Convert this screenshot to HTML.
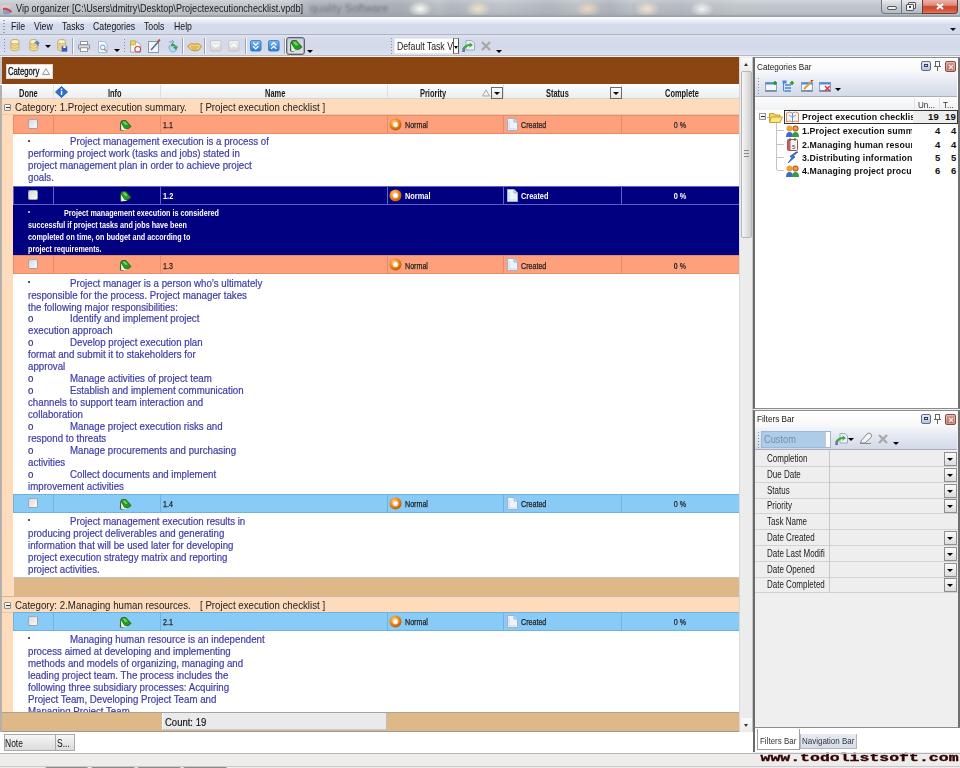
<!DOCTYPE html>
<html><head><meta charset="utf-8"><style>
*{margin:0;padding:0;box-sizing:border-box}
html,body{width:960px;height:768px;overflow:hidden;background:#efedeb;font-family:"Liberation Sans",sans-serif;font-size:10px;color:#000}
div,span{position:absolute}
.t{white-space:pre;line-height:1}
</style></head><body>
<div style="left:0px;top:0px;width:960px;height:17px;background:radial-gradient(12px 8px at 420px 9px,rgba(255,255,240,.95),rgba(255,255,240,0)),radial-gradient(13px 8px at 478px 9px,rgba(255,240,200,.75),rgba(255,240,200,0)),radial-gradient(13px 8px at 588px 9px,rgba(255,225,190,.75),rgba(255,225,190,0)),radial-gradient(13px 8px at 647px 9px,rgba(255,235,210,.8),rgba(255,235,210,0)),radial-gradient(12px 8px at 702px 9px,rgba(255,255,255,.8),rgba(255,255,255,0)),linear-gradient(90deg,rgba(0,0,0,0) 290px,rgba(40,50,60,.14) 310px,rgba(40,50,60,.16) 400px,rgba(0,0,0,.04) 440px,rgba(40,50,60,.1) 450px,rgba(0,0,0,.02) 500px,rgba(40,50,60,.1) 550px,rgba(0,0,0,.03) 575px,rgba(40,50,60,.12) 610px,rgba(0,0,0,.03) 630px,rgba(40,50,60,.08) 680px,rgba(0,0,0,0) 740px),linear-gradient(#d2d6db,#c4c9cf 25%,#bcc1c7 70%,#aeb3b9)"></div>
<div style="left:0px;top:15px;width:960px;height:2px;background:linear-gradient(#a4a9af,#9a9fa5)"></div>
<span class="t" style="left:310px;top:3px;font-size:11px;color:rgba(70,75,80,.55);filter:blur(1px)">quality Software</span>
<svg style="position:absolute;left:0px;top:2px" width="13" height="13" viewBox="0 0 13 13">
<ellipse cx="6.5" cy="10.3" rx="3.5" ry="2" fill="#8090d8" opacity="0.85"/>
<path d="M1 5 Q3 2 6 3 Q8 4 10 3 L11 5 Q8 6 5 5 Q3 5 2 7 Z" fill="#f0c8d0" opacity="0.9"/>
<path d="M3 6 Q6 5 9 7 Q11 8 12 9 L11 11 Q8 8 5 8 Q3 8 3 9 Z" fill="#d03838" opacity="0.9"/>
</svg>
<span class="t" style="left:16px;top:2.5px;transform:scaleX(0.868);transform-origin:0 0;font-size:10.5px;color:#1a1a1a">Vip organizer [C:\Users\dmitry\Desktop\Projectexecutionchecklist.vpdb]</span>
<div style="left:881px;top:0px;width:21px;height:14px;background:linear-gradient(#e8ebee,#c9ced4 50%,#b5bcc4);border:1px solid #6f7780;border-top:none;border-radius:0 0 0 4px"></div>
<div style="left:887px;top:6px;width:10px;height:4px;background:#f4f4f4;border:1px solid #555;border-radius:2px"></div>
<div style="left:901px;top:0px;width:22px;height:14px;background:linear-gradient(#e8ebee,#c9ced4 50%,#b5bcc4);border:1px solid #6f7780;border-top:none"></div>
<div style="left:908px;top:1.5px;width:8px;height:7px;border:1px solid #555;background:#eee;border-radius:1px"></div>
<div style="left:906px;top:3.5px;width:8px;height:7px;border:1px solid #555;background:#f4f4f4;border-radius:1px"></div>
<div style="left:909px;top:6px;width:2px;height:2px;background:#444"></div>
<div style="left:922px;top:0px;width:36px;height:14px;background:linear-gradient(#eab3a8,#e08c7c 40%,#cf4a32 50%,#d4583c 80%,#e07a5a);border:1px solid #6b3b36;border-top:none;border-radius:0 0 4px 0"></div>
<svg style="position:absolute;left:936px;top:2.5px" width="8" height="7"><path d="M1 1 L7 6 M7 1 L1 6" stroke="#fff" stroke-width="2"/></svg>
<div style="left:0px;top:17px;width:960px;height:18px;background:linear-gradient(#fdfdfe,#e4e8f3 30%,#d5dbeb 45%,#d5dbeb);border-bottom:1px solid #aeb4c2"></div>
<span class="t" style="left:11px;top:21px;transform:scaleX(0.83);transform-origin:0 0;font-size:10.5px;color:#15151f">File</span>
<span class="t" style="left:34px;top:21px;transform:scaleX(0.83);transform-origin:0 0;font-size:10.5px;color:#15151f">View</span>
<span class="t" style="left:62px;top:21px;transform:scaleX(0.83);transform-origin:0 0;font-size:10.5px;color:#15151f">Tasks</span>
<span class="t" style="left:92.5px;top:21px;transform:scaleX(0.83);transform-origin:0 0;font-size:10.5px;color:#15151f">Categories</span>
<span class="t" style="left:143.5px;top:21px;transform:scaleX(0.83);transform-origin:0 0;font-size:10.5px;color:#15151f">Tools</span>
<span class="t" style="left:174px;top:21px;transform:scaleX(0.83);transform-origin:0 0;font-size:10.5px;color:#15151f">Help</span>
<div style="left:3px;top:20px;width:2px;height:1px;background:#9aa0b0"></div>
<div style="left:3px;top:23px;width:2px;height:1px;background:#9aa0b0"></div>
<div style="left:3px;top:26px;width:2px;height:1px;background:#9aa0b0"></div>
<div style="left:3px;top:29px;width:2px;height:1px;background:#9aa0b0"></div>
<div style="left:3px;top:32px;width:2px;height:1px;background:#9aa0b0"></div>
<div style="left:950px;top:28px;width:0;height:0;border-left:3px solid transparent;border-right:3px solid transparent;border-top:3px solid #111"></div>
<div style="left:0px;top:35px;width:960px;height:21px;background:linear-gradient(#dfe4f1,#d5dbeb 20%,#d3d9ea 60%,#dde2ef);border-bottom:1px solid #b4b9c6"></div>
<div style="left:0px;top:56px;width:960px;height:1px;background:#f4f4f4"></div>
<div style="left:4px;top:39px;width:1px;height:1px;background:#8a8fa0"></div>
<div style="left:4px;top:42px;width:1px;height:1px;background:#8a8fa0"></div>
<div style="left:4px;top:45px;width:1px;height:1px;background:#8a8fa0"></div>
<div style="left:4px;top:48px;width:1px;height:1px;background:#8a8fa0"></div>
<div style="left:4px;top:51px;width:1px;height:1px;background:#8a8fa0"></div>
<svg style="position:absolute;left:10px;top:39px" width="10.5" height="13.5" viewBox="0 0 13 15" preserveAspectRatio="none"><ellipse cx="6" cy="3" rx="5" ry="2.3" fill="#fff3b8" stroke="#b8a060" stroke-width="0.8"/><path d="M1 3 V12 Q6 15 11 12 V3" fill="#f2dc8c" stroke="#b8a060" stroke-width="0.8"/><path d="M1 6 Q6 9 11 6 M1 9 Q6 12 11 9" fill="none" stroke="#c8b070" stroke-width="0.8"/><ellipse cx="6" cy="3" rx="5" ry="2.3" fill="#fff6c8" stroke="#b8a060" stroke-width="0.8"/></svg>
<svg style="position:absolute;left:29px;top:39px" width="11" height="13.5" viewBox="0 0 14 15" preserveAspectRatio="none"><ellipse cx="6" cy="3" rx="5" ry="2.3" fill="#fff3b8" stroke="#b8a060" stroke-width="0.8"/><path d="M1 3 V12 Q6 15 11 12 V3" fill="#f2dc8c" stroke="#b8a060" stroke-width="0.8"/><path d="M1 6 Q6 9 11 6 M1 9 Q6 12 11 9" fill="none" stroke="#c8b070" stroke-width="0.8"/><ellipse cx="6" cy="3" rx="5" ry="2.3" fill="#fff6c8" stroke="#b8a060" stroke-width="0.8"/><path d="M7 4 Q11 1 13 5 L11 5 L12 8" fill="#5a8ad8" stroke="#3a6ab8" stroke-width="0.8"/></svg>
<div style="left:45px;top:45px;width:0;height:0;border-left:3px solid transparent;border-right:3px solid transparent;border-top:3px solid #000"></div>
<svg style="position:absolute;left:56.5px;top:39px" width="11" height="13.5" viewBox="0 0 14 15" preserveAspectRatio="none"><ellipse cx="6" cy="3" rx="5" ry="2.3" fill="#fff3b8" stroke="#b8a060" stroke-width="0.8"/><path d="M1 3 V12 Q6 15 11 12 V3" fill="#f2dc8c" stroke="#b8a060" stroke-width="0.8"/><path d="M1 6 Q6 9 11 6 M1 9 Q6 12 11 9" fill="none" stroke="#c8b070" stroke-width="0.8"/><ellipse cx="6" cy="3" rx="5" ry="2.3" fill="#fff6c8" stroke="#b8a060" stroke-width="0.8"/><rect x="6" y="8" width="7" height="6" fill="#3a5ab8"/><rect x="8" y="8" width="3" height="2" fill="#fff"/></svg>
<div style="left:72px;top:38px;width:1px;height:16px;background:#9ea3b3"></div>
<div style="left:73px;top:38px;width:1px;height:16px;background:#fafbfe"></div>
<svg style="position:absolute;left:78px;top:41px" width="12" height="11" viewBox="0 0 14 13" preserveAspectRatio="none"><rect x="3" y="0.5" width="8" height="4" fill="#fff" stroke="#888"/><rect x="0.5" y="4.5" width="13" height="5" rx="1" fill="#d8dce4" stroke="#777"/><rect x="3" y="8" width="8" height="4.5" fill="#fff" stroke="#888"/></svg>
<svg style="position:absolute;left:97.5px;top:40.5px" width="11" height="12" viewBox="0 0 14 15" preserveAspectRatio="none"><path d="M0.5 0.5 H8 L11.5 4 V14.5 H0.5 Z" fill="#f4f7fb" stroke="#9aa8c0"/><circle cx="6" cy="8" r="3" fill="none" stroke="#5a9ad8" stroke-width="1.2"/><path d="M8 10 L11 13" stroke="#c87a3a" stroke-width="1.5"/></svg>
<div style="left:114px;top:49px;width:0;height:0;border-left:3px solid transparent;border-right:3px solid transparent;border-top:3px solid #000"></div>
<div style="left:124px;top:39px;width:1px;height:1px;background:#8a8fa0"></div>
<div style="left:124px;top:42px;width:1px;height:1px;background:#8a8fa0"></div>
<div style="left:124px;top:45px;width:1px;height:1px;background:#8a8fa0"></div>
<div style="left:124px;top:48px;width:1px;height:1px;background:#8a8fa0"></div>
<div style="left:124px;top:51px;width:1px;height:1px;background:#8a8fa0"></div>
<svg style="position:absolute;left:130px;top:40px" width="12" height="12.5" viewBox="0 0 14 15" preserveAspectRatio="none"><path d="M0.5 2.5 H9 L12.5 6 V14.5 H0.5 Z" fill="#f3f4f6" stroke="#9a9aa8"/><rect x="0.5" y="1" width="6" height="5" fill="#f0d050" stroke="#b89a30" stroke-width="0.6"/><circle cx="9" cy="11" r="3.3" fill="#fff" stroke="#d04040" stroke-width="1.2"/></svg>
<svg style="position:absolute;left:148px;top:39px" width="13" height="14" viewBox="0 0 13 14" preserveAspectRatio="none"><rect x="0.5" y="2.5" width="10" height="11" fill="#f4f6fa" stroke="#8a98b0"/><path d="M3 11 L11 2" stroke="#5070a0" stroke-width="1.6"/><path d="M10 2.5 L12 0.5" stroke="#e04a2a" stroke-width="1.8"/></svg>
<svg style="position:absolute;left:166px;top:39px" width="13" height="15" viewBox="0 0 13 15" preserveAspectRatio="none"><path d="M3 7 Q3 13 7 13 Q11 13 11 7 Z" fill="#b8d8f4" stroke="#7aa0c8" stroke-width="0.8"/><path d="M3 3 L8 3 L6 1 M8 3 L6 5" fill="none" stroke="#7a9ac8" stroke-width="1"/><path d="M5 5 Q9 4 10 8 L12 7 L10 11 L7 8 L9 8 Q8 6 5 7 Z" fill="#30a040"/></svg>
<div style="left:182px;top:38px;width:1px;height:16px;background:#9ea3b3"></div>
<div style="left:183px;top:38px;width:1px;height:16px;background:#fafbfe"></div>
<svg style="position:absolute;left:187px;top:42px" width="15" height="10" viewBox="0 0 15 10" preserveAspectRatio="none"><path d="M0.5 4 Q4 0.5 8 2 Q12 0.5 14.5 4 L12 8 Q8 10 4 8 Z" fill="#f0d070" stroke="#b08a30" stroke-width="0.8"/><path d="M4 5 H11 M5 7 H10" stroke="#c89a40" stroke-width="0.8"/></svg>
<div style="left:204px;top:38px;width:1px;height:16px;background:#9ea3b3"></div>
<div style="left:205px;top:38px;width:1px;height:16px;background:#fafbfe"></div>
<svg style="position:absolute;left:210px;top:40px" width="11.5" height="11.5" viewBox="0 0 13 13" preserveAspectRatio="none"><defs><linearGradient id="g210" x1="0" y1="0" x2="0" y2="1"><stop offset="0" stop-color="#f4f4f4"/><stop offset="1" stop-color="#d2d2d2"/></linearGradient></defs><rect x="0.5" y="0.5" width="12" height="12" rx="2" fill="url(#g210)" stroke="#c4c4c4"/><path d="M3.5 5 L6.5 8 L9.5 5" fill="none" stroke="#fff" stroke-width="1.6"/></svg>
<svg style="position:absolute;left:228px;top:40px" width="11.5" height="11.5" viewBox="0 0 13 13" preserveAspectRatio="none"><defs><linearGradient id="g228" x1="0" y1="0" x2="0" y2="1"><stop offset="0" stop-color="#f4f4f4"/><stop offset="1" stop-color="#d2d2d2"/></linearGradient></defs><rect x="0.5" y="0.5" width="12" height="12" rx="2" fill="url(#g228)" stroke="#c4c4c4"/><path d="M3.5 8 L6.5 5 L9.5 8" fill="none" stroke="#fff" stroke-width="1.6"/></svg>
<div style="left:245px;top:38px;width:1px;height:16px;background:#9ea3b3"></div>
<div style="left:246px;top:38px;width:1px;height:16px;background:#fafbfe"></div>
<svg style="position:absolute;left:250px;top:40px" width="11.5" height="11.5" viewBox="0 0 13 13" preserveAspectRatio="none"><defs><linearGradient id="g250" x1="0" y1="0" x2="0" y2="1"><stop offset="0" stop-color="#7ab8f0"/><stop offset="1" stop-color="#2a78d0"/></linearGradient></defs><rect x="0.5" y="0.5" width="12" height="12" rx="2" fill="url(#g250)" stroke="#3a7ac0"/><path d="M3.5 3 L6.5 6 L9.5 3 M3.5 7 L6.5 10 L9.5 7" fill="none" stroke="#fff" stroke-width="1.5"/></svg>
<svg style="position:absolute;left:268px;top:40px" width="11.5" height="11.5" viewBox="0 0 13 13" preserveAspectRatio="none"><defs><linearGradient id="g268" x1="0" y1="0" x2="0" y2="1"><stop offset="0" stop-color="#7ab8f0"/><stop offset="1" stop-color="#2a78d0"/></linearGradient></defs><rect x="0.5" y="0.5" width="12" height="12" rx="2" fill="url(#g268)" stroke="#3a7ac0"/><path d="M3.5 6 L6.5 3 L9.5 6 M3.5 10 L6.5 7 L9.5 10" fill="none" stroke="#fff" stroke-width="1.5"/></svg>
<div style="left:284px;top:38px;width:1px;height:16px;background:#9ea3b3"></div>
<div style="left:285px;top:38px;width:1px;height:16px;background:#fafbfe"></div>
<div style="left:286px;top:37px;width:19px;height:18px;background:linear-gradient(#c9d0dc,#dde2ea);border:1px solid #5a6070;border-radius:3px;box-shadow:inset 0 0 0 1px #a9b0bd"></div>
<svg style="position:absolute;left:288.5px;top:38.5px" width="15" height="14" viewBox="0 0 14 13" preserveAspectRatio="none"><path d="M0.8 11 L1.2 4 Q1.8 1 4 1 L6.8 1 L12.6 7.4 L9.8 9.8 L6.5 10.8 L2.5 12 Z" fill="#2d5a1e" opacity="0.9"/><path d="M2.4 3.4 Q3 2 4.2 1.9 L6.6 1.9 L11.4 7.4 L9.2 9.1 L5.6 9.6 Z" fill="#1f9e1f"/><path d="M3.5 2.6 L6.2 2.4 L9 5.5 L6 6 Z" fill="#6fd45f"/><path d="M2 4.2 L5.4 9.8 L8.8 10.1 L6.2 10.9 L2.2 11.3 Z" fill="#eef6ee"/></svg>
<div style="left:307px;top:50px;width:0;height:0;border-left:3px solid transparent;border-right:3px solid transparent;border-top:3px solid #000"></div>
<div style="left:391px;top:38px;width:1px;height:1px;background:#8a8fa0"></div>
<div style="left:391px;top:41px;width:1px;height:1px;background:#8a8fa0"></div>
<div style="left:391px;top:44px;width:1px;height:1px;background:#8a8fa0"></div>
<div style="left:391px;top:47px;width:1px;height:1px;background:#8a8fa0"></div>
<div style="left:391px;top:50px;width:1px;height:1px;background:#8a8fa0"></div>
<div style="left:391px;top:53px;width:1px;height:1px;background:#8a8fa0"></div>
<div style="left:394px;top:38px;width:65px;height:16px;background:#fff;border:1px solid #e8e8e8"></div>
<span class="t" style="left:397px;top:41.5px;transform:scaleX(0.87);transform-origin:0 0;font-size:10px;color:#1a1a1a">Default Task V</span>
<div style="left:452.5px;top:38px;width:6px;height:16px;background:#fff;border:1px solid #555;border-top-color:#999;border-bottom-color:#999"></div>
<div style="left:453.5px;top:46px;width:0;height:0;border-left:2px solid transparent;border-right:2px solid transparent;border-top:3px solid #000"></div>
<svg style="position:absolute;left:461px;top:40px" width="14" height="13" viewBox="0 0 14 13" preserveAspectRatio="none"><path d="M5 0.5 H10 L13.5 3 V10 H5 Z" fill="#eef2f8" stroke="#9aaac0"/><path d="M1 9 Q4 4 9 4 L8 2 L12 5 L8 8 L9 6 Q5 6 3 11 Z" fill="#3aa83a"/><path d="M1 12 Q1 9 4 9 V12 Z" fill="#7070d0"/></svg>
<svg style="position:absolute;left:481px;top:41px" width="10" height="10" viewBox="0 0 10 10" preserveAspectRatio="none"><path d="M1 1 L9 9 M9 1 L1 9" stroke="#a8a8a8" stroke-width="2.4"/></svg>
<div style="left:496px;top:50px;width:0;height:0;border-left:3px solid transparent;border-right:3px solid transparent;border-top:3px solid #000"></div>
<div style="left:0px;top:57px;width:740px;height:675px;background:#fff"></div>
<div style="left:0px;top:57px;width:739px;height:27px;background:#8b4513"></div>
<div style="left:0px;top:57px;width:1.5px;height:27px;background:#c8c8c8"></div>
<div style="left:6px;top:64px;width:47px;height:15px;background:linear-gradient(#ffffff,#f6f6f6);border:1px solid #e0d8d0"></div>
<span class="t" style="left:7.5px;top:66.5px;transform:scaleX(0.77);transform-origin:0 0;font-size:10px;color:#111;-webkit-text-stroke:0.3px #111">Category</span>
<svg style="position:absolute;left:42px;top:68px" width="8" height="7"><path d="M0.5 6.5 L4 0.5 L7.5 6.5 Z" fill="none" stroke="#9a9a9a"/></svg>
<div style="left:0px;top:85px;width:739px;height:14px;background:linear-gradient(#fdfdfd,#f3f4f6 50%,#eceef1);border-bottom:1px solid #d5d5d5"></div>
<div style="left:53px;top:85px;width:1px;height:13px;background:#dedede"></div>
<div style="left:160px;top:85px;width:1px;height:13px;background:#dedede"></div>
<div style="left:387px;top:85px;width:1px;height:13px;background:#dedede"></div>
<div style="left:503px;top:85px;width:1px;height:13px;background:#dedede"></div>
<div style="left:621px;top:85px;width:1px;height:13px;background:#dedede"></div>
<span class="t" style="left:18.5px;top:88.5px;transform:scaleX(0.745);transform-origin:0 0;font-size:10px;font-weight:bold;color:#1a1a1a">Done</span>
<span class="t" style="left:107.5px;top:88.5px;transform:scaleX(0.745);transform-origin:0 0;font-size:10px;font-weight:bold;color:#1a1a1a">Info</span>
<span class="t" style="left:265px;top:88.5px;transform:scaleX(0.745);transform-origin:0 0;font-size:10px;font-weight:bold;color:#1a1a1a">Name</span>
<span class="t" style="left:420px;top:88.5px;transform:scaleX(0.745);transform-origin:0 0;font-size:10px;font-weight:bold;color:#1a1a1a">Priority</span>
<span class="t" style="left:546px;top:88.5px;transform:scaleX(0.745);transform-origin:0 0;font-size:10px;font-weight:bold;color:#1a1a1a">Status</span>
<span class="t" style="left:665px;top:88.5px;transform:scaleX(0.745);transform-origin:0 0;font-size:10px;font-weight:bold;color:#1a1a1a">Complete</span>
<svg style="position:absolute;left:55px;top:86px" width="13" height="12" viewBox="0 0 13 12"><path d="M6.5 0.5 L12.5 6 L6.5 11.5 L0.5 6 Z" fill="#2a6fd0" stroke="#1b4ea0" stroke-width="0.8"/><rect x="5.8" y="2.5" width="1.5" height="1.5" fill="#fff"/><rect x="5.8" y="4.8" width="1.5" height="4" fill="#fff"/></svg>
<svg style="position:absolute;left:482px;top:89px" width="8" height="8"><path d="M0.5 7 L4 0.8 L7.5 7 Z" fill="none" stroke="#a8a8a8"/></svg>
<div style="left:491px;top:87px;width:12px;height:12px;background:linear-gradient(#fff,#e6e6e6);border:1px solid #6a6a6a"></div>
<div style="left:494px;top:92px;width:0;height:0;border-left:3px solid transparent;border-right:3px solid transparent;border-top:3px solid #000"></div>
<div style="left:610px;top:87px;width:12px;height:12px;background:linear-gradient(#fff,#e6e6e6);border:1px solid #6a6a6a"></div>
<div style="left:613px;top:92px;width:0;height:0;border-left:3px solid transparent;border-right:3px solid transparent;border-top:3px solid #000"></div>
<div style="left:0px;top:85px;width:2px;height:647px;background:#b4b0ac"></div>
<div style="left:2px;top:99px;width:11px;height:613px;background:#fddbbb"></div>
<div style="left:0px;top:99px;width:739px;height:16px;background:#fddbbb;border-bottom:1px solid #e8c9a8"></div>
<div style="left:4px;top:104px;width:7px;height:7px;background:linear-gradient(#fff,#e4e4e4);border:1px solid #8e8e8e;border-radius:1px"></div>
<div style="left:5.5px;top:107px;width:4px;height:1px;background:#333"></div>
<span class="t" style="left:14.5px;top:103px;transform:scaleX(0.97);transform-origin:0 0;font-size:10px;color:#222">Category: 1.Project execution summary.</span>
<span class="t" style="left:200px;top:103px;transform:scaleX(0.97);transform-origin:0 0;font-size:10px;color:#222">[ Project execution checklist ]</span>
<div style="left:13px;top:115px;width:726px;height:19px;background:#fea07b;border-top:1px solid #e68c6a;border-bottom:1px solid #e68c6a;border-left:1px solid #e68c6a"></div>
<div style="left:53px;top:115px;width:1px;height:19px;background:#e68c6a"></div>
<div style="left:160px;top:115px;width:1px;height:19px;background:#e68c6a"></div>
<div style="left:387px;top:115px;width:1px;height:19px;background:#e68c6a"></div>
<div style="left:503px;top:115px;width:1px;height:19px;background:#e68c6a"></div>
<div style="left:621px;top:115px;width:1px;height:19px;background:#e68c6a"></div>
<div style="left:28px;top:119px;width:10px;height:10px;background:linear-gradient(135deg,#d6d9de,#fafafa);border:1px solid rgba(80,80,80,0.45);border-radius:2px"></div>
<svg style="position:absolute;left:118.5px;top:118.5px" width="14" height="13" viewBox="0 0 14 13">
<path d="M0.8 11 L1.2 4 Q1.8 1 4 1 L6.8 1 L12.6 7.4 L9.8 9.8 L6.5 10.8 L2.5 12 Z" fill="#2d5a1e" opacity="0.9"/>
<path d="M2.4 3.4 Q3 2 4.2 1.9 L6.6 1.9 L11.4 7.4 L9.2 9.1 L5.6 9.6 Z" fill="#1f9e1f"/>
<path d="M3.5 2.6 L6.2 2.4 L9 5.5 L6 6 Z" fill="#6fd45f"/>
<path d="M2 4.2 L5.4 9.8 L8.8 10.1 L6.2 10.9 L2.2 11.3 Z" fill="#eef6ee"/>
</svg>
<span class="t" style="left:163px;top:120.6px;transform:scaleX(0.79);transform-origin:0 0;font-size:9px;color:#222;-webkit-text-stroke:0.25px #222;">1.1</span>
<svg style="position:absolute;left:389px;top:118px" width="13" height="13" viewBox="0 0 13 13">
<defs><radialGradient id="pg118" cx="0.4" cy="0.35" r="0.7"><stop offset="0" stop-color="#ffd39a"/><stop offset="0.5" stop-color="#f08a1e"/><stop offset="1" stop-color="#b85408"/></radialGradient></defs>
<circle cx="6.5" cy="6.5" r="6" fill="url(#pg118)"/><circle cx="6.5" cy="6.5" r="2.6" fill="#fff" stroke="#f6c58a" stroke-width="0.8"/></svg>
<span class="t" style="left:405px;top:120.6px;transform:scaleX(0.79);transform-origin:0 0;font-size:9px;color:#222;-webkit-text-stroke:0.25px #222;">Normal</span>
<svg style="position:absolute;left:507px;top:118px" width="11" height="13" viewBox="0 0 11 13">
<path d="M0.5 0.5 H7 L10.5 4 V12.5 H0.5 Z" fill="#eef3fb" stroke="#9fb3d0" stroke-width="1"/><path d="M7 0.5 V4 H10.5" fill="#cfdcef" stroke="#9fb3d0" stroke-width="1"/>
<path d="M2 3 V11 H9" fill="none" stroke="#c5d5ec" stroke-width="1"/></svg>
<span class="t" style="left:521px;top:120.6px;transform:scaleX(0.79);transform-origin:0 0;font-size:9px;color:#222;-webkit-text-stroke:0.25px #222;">Created</span>
<span class="t" style="left:621px;top:120.6px;transform:scaleX(0.79);transform-origin:50% 0;font-size:9px;color:#222;-webkit-text-stroke:0.25px #222;width:118px;text-align:center">0 %</span>
<div style="left:13px;top:134px;width:726px;height:52px;background:#fff"></div>
<div style="left:28px;top:139.75px;width:2px;height:2px;background:#555"></div>
<span class="t" style="left:70px;top:137.25px;transform:scaleX(0.97);transform-origin:0 0;font-size:10px;color:#3d3da8;-webkit-text-stroke:0.2px #3d3da8">Project management execution is a process of</span>
<span class="t" style="left:28px;top:149.2px;transform:scaleX(0.97);transform-origin:0 0;font-size:10px;color:#3d3da8;-webkit-text-stroke:0.2px #3d3da8">performing project work (tasks and jobs) stated in</span>
<span class="t" style="left:28px;top:161.15px;transform:scaleX(0.97);transform-origin:0 0;font-size:10px;color:#3d3da8;-webkit-text-stroke:0.2px #3d3da8">project management plan in order to achieve project</span>
<span class="t" style="left:28px;top:173.1px;transform:scaleX(0.97);transform-origin:0 0;font-size:10px;color:#3d3da8;-webkit-text-stroke:0.2px #3d3da8">goals.</span>
<div style="left:13px;top:186px;width:726px;height:19px;background:#000080;border-top:1px solid #6060c8;border-bottom:1px solid #6060c8;border-left:1px solid #6060c8"></div>
<div style="left:53px;top:186px;width:1px;height:19px;background:#6060c8"></div>
<div style="left:160px;top:186px;width:1px;height:19px;background:#6060c8"></div>
<div style="left:387px;top:186px;width:1px;height:19px;background:#6060c8"></div>
<div style="left:503px;top:186px;width:1px;height:19px;background:#6060c8"></div>
<div style="left:621px;top:186px;width:1px;height:19px;background:#6060c8"></div>
<div style="left:28px;top:190px;width:10px;height:10px;background:linear-gradient(135deg,#d6d9de,#fafafa);border:1px solid rgba(80,80,80,0.45);border-radius:2px"></div>
<svg style="position:absolute;left:118.5px;top:189.5px" width="14" height="13" viewBox="0 0 14 13">
<path d="M0.8 11 L1.2 4 Q1.8 1 4 1 L6.8 1 L12.6 7.4 L9.8 9.8 L6.5 10.8 L2.5 12 Z" fill="#2d5a1e" opacity="0.9"/>
<path d="M2.4 3.4 Q3 2 4.2 1.9 L6.6 1.9 L11.4 7.4 L9.2 9.1 L5.6 9.6 Z" fill="#1f9e1f"/>
<path d="M3.5 2.6 L6.2 2.4 L9 5.5 L6 6 Z" fill="#6fd45f"/>
<path d="M2 4.2 L5.4 9.8 L8.8 10.1 L6.2 10.9 L2.2 11.3 Z" fill="#eef6ee"/>
</svg>
<span class="t" style="left:163px;top:191.6px;transform:scaleX(0.82);transform-origin:0 0;font-size:9px;color:#fff;font-weight:bold;">1.2</span>
<svg style="position:absolute;left:389px;top:189px" width="13" height="13" viewBox="0 0 13 13">
<defs><radialGradient id="pg189" cx="0.4" cy="0.35" r="0.7"><stop offset="0" stop-color="#ffd39a"/><stop offset="0.5" stop-color="#f08a1e"/><stop offset="1" stop-color="#b85408"/></radialGradient></defs>
<circle cx="6.5" cy="6.5" r="6" fill="url(#pg189)"/><circle cx="6.5" cy="6.5" r="2.6" fill="#fff" stroke="#f6c58a" stroke-width="0.8"/></svg>
<span class="t" style="left:405px;top:191.6px;transform:scaleX(0.82);transform-origin:0 0;font-size:9px;color:#fff;font-weight:bold;">Normal</span>
<svg style="position:absolute;left:507px;top:189px" width="11" height="13" viewBox="0 0 11 13">
<path d="M0.5 0.5 H7 L10.5 4 V12.5 H0.5 Z" fill="#eef3fb" stroke="#9fb3d0" stroke-width="1"/><path d="M7 0.5 V4 H10.5" fill="#cfdcef" stroke="#9fb3d0" stroke-width="1"/>
<path d="M2 3 V11 H9" fill="none" stroke="#c5d5ec" stroke-width="1"/></svg>
<span class="t" style="left:521px;top:191.6px;transform:scaleX(0.82);transform-origin:0 0;font-size:9px;color:#fff;font-weight:bold;">Created</span>
<span class="t" style="left:621px;top:191.6px;transform:scaleX(0.82);transform-origin:50% 0;font-size:9px;color:#fff;font-weight:bold;width:118px;text-align:center">0 %</span>
<div style="left:13px;top:205px;width:726px;height:50px;background:#000080"></div>
<div style="left:28px;top:210.7px;width:2px;height:2px;background:#aab"></div>
<span class="t" style="left:64px;top:209.0px;transform:scaleX(0.8);transform-origin:0 0;font-size:9px;font-weight:bold;color:#fff">Project management execution is considered</span>
<span class="t" style="left:28px;top:221.0px;transform:scaleX(0.8);transform-origin:0 0;font-size:9px;font-weight:bold;color:#fff">successful if project tasks and jobs have been</span>
<span class="t" style="left:28px;top:233.0px;transform:scaleX(0.8);transform-origin:0 0;font-size:9px;font-weight:bold;color:#fff">completed on time, on budget and according to</span>
<span class="t" style="left:28px;top:245.0px;transform:scaleX(0.8);transform-origin:0 0;font-size:9px;font-weight:bold;color:#fff">project requirements.</span>
<div style="left:13px;top:255px;width:726px;height:19px;background:#fea07b;border-top:1px solid #e68c6a;border-bottom:1px solid #e68c6a;border-left:1px solid #e68c6a"></div>
<div style="left:53px;top:255px;width:1px;height:19px;background:#e68c6a"></div>
<div style="left:160px;top:255px;width:1px;height:19px;background:#e68c6a"></div>
<div style="left:387px;top:255px;width:1px;height:19px;background:#e68c6a"></div>
<div style="left:503px;top:255px;width:1px;height:19px;background:#e68c6a"></div>
<div style="left:621px;top:255px;width:1px;height:19px;background:#e68c6a"></div>
<div style="left:28px;top:259px;width:10px;height:10px;background:linear-gradient(135deg,#d6d9de,#fafafa);border:1px solid rgba(80,80,80,0.45);border-radius:2px"></div>
<svg style="position:absolute;left:118.5px;top:258.5px" width="14" height="13" viewBox="0 0 14 13">
<path d="M0.8 11 L1.2 4 Q1.8 1 4 1 L6.8 1 L12.6 7.4 L9.8 9.8 L6.5 10.8 L2.5 12 Z" fill="#2d5a1e" opacity="0.9"/>
<path d="M2.4 3.4 Q3 2 4.2 1.9 L6.6 1.9 L11.4 7.4 L9.2 9.1 L5.6 9.6 Z" fill="#1f9e1f"/>
<path d="M3.5 2.6 L6.2 2.4 L9 5.5 L6 6 Z" fill="#6fd45f"/>
<path d="M2 4.2 L5.4 9.8 L8.8 10.1 L6.2 10.9 L2.2 11.3 Z" fill="#eef6ee"/>
</svg>
<span class="t" style="left:163px;top:261.8px;transform:scaleX(0.79);transform-origin:0 0;font-size:9px;color:#222;-webkit-text-stroke:0.25px #222;">1.3</span>
<svg style="position:absolute;left:389px;top:258px" width="13" height="13" viewBox="0 0 13 13">
<defs><radialGradient id="pg258" cx="0.4" cy="0.35" r="0.7"><stop offset="0" stop-color="#ffd39a"/><stop offset="0.5" stop-color="#f08a1e"/><stop offset="1" stop-color="#b85408"/></radialGradient></defs>
<circle cx="6.5" cy="6.5" r="6" fill="url(#pg258)"/><circle cx="6.5" cy="6.5" r="2.6" fill="#fff" stroke="#f6c58a" stroke-width="0.8"/></svg>
<span class="t" style="left:405px;top:261.8px;transform:scaleX(0.79);transform-origin:0 0;font-size:9px;color:#222;-webkit-text-stroke:0.25px #222;">Normal</span>
<svg style="position:absolute;left:507px;top:258px" width="11" height="13" viewBox="0 0 11 13">
<path d="M0.5 0.5 H7 L10.5 4 V12.5 H0.5 Z" fill="#eef3fb" stroke="#9fb3d0" stroke-width="1"/><path d="M7 0.5 V4 H10.5" fill="#cfdcef" stroke="#9fb3d0" stroke-width="1"/>
<path d="M2 3 V11 H9" fill="none" stroke="#c5d5ec" stroke-width="1"/></svg>
<span class="t" style="left:521px;top:261.8px;transform:scaleX(0.79);transform-origin:0 0;font-size:9px;color:#222;-webkit-text-stroke:0.25px #222;">Created</span>
<span class="t" style="left:621px;top:261.8px;transform:scaleX(0.79);transform-origin:50% 0;font-size:9px;color:#222;font-weight:bold;width:118px;text-align:center">0 %</span>
<div style="left:13px;top:274px;width:726px;height:220px;background:#fff"></div>
<div style="left:28px;top:281.1px;width:2px;height:2px;background:#555"></div>
<span class="t" style="left:70px;top:278.6px;transform:scaleX(0.97);transform-origin:0 0;font-size:10px;color:#3d3da8;-webkit-text-stroke:0.2px #3d3da8">Project manager is a person who’s ultimately</span>
<span class="t" style="left:28px;top:290.55px;transform:scaleX(0.97);transform-origin:0 0;font-size:10px;color:#3d3da8;-webkit-text-stroke:0.2px #3d3da8">responsible for the process. Project manager takes</span>
<span class="t" style="left:28px;top:302.5px;transform:scaleX(0.97);transform-origin:0 0;font-size:10px;color:#3d3da8;-webkit-text-stroke:0.2px #3d3da8">the following major responsibilities:</span>
<span class="t" style="left:28px;top:314.45px;transform:scaleX(0.97);transform-origin:0 0;font-size:10px;color:#3d3da8;-webkit-text-stroke:0.2px #3d3da8;color:#30307a;-webkit-text-stroke:0.2px #30307a">o</span>
<span class="t" style="left:70px;top:314.45px;transform:scaleX(0.97);transform-origin:0 0;font-size:10px;color:#3d3da8;-webkit-text-stroke:0.2px #3d3da8">Identify and implement project</span>
<span class="t" style="left:28px;top:326.4px;transform:scaleX(0.97);transform-origin:0 0;font-size:10px;color:#3d3da8;-webkit-text-stroke:0.2px #3d3da8">execution approach</span>
<span class="t" style="left:28px;top:338.35px;transform:scaleX(0.97);transform-origin:0 0;font-size:10px;color:#3d3da8;-webkit-text-stroke:0.2px #3d3da8;color:#30307a;-webkit-text-stroke:0.2px #30307a">o</span>
<span class="t" style="left:70px;top:338.35px;transform:scaleX(0.97);transform-origin:0 0;font-size:10px;color:#3d3da8;-webkit-text-stroke:0.2px #3d3da8">Develop project execution plan</span>
<span class="t" style="left:28px;top:350.3px;transform:scaleX(0.97);transform-origin:0 0;font-size:10px;color:#3d3da8;-webkit-text-stroke:0.2px #3d3da8">format and submit it to stakeholders for</span>
<span class="t" style="left:28px;top:362.25px;transform:scaleX(0.97);transform-origin:0 0;font-size:10px;color:#3d3da8;-webkit-text-stroke:0.2px #3d3da8">approval</span>
<span class="t" style="left:28px;top:374.2px;transform:scaleX(0.97);transform-origin:0 0;font-size:10px;color:#3d3da8;-webkit-text-stroke:0.2px #3d3da8;color:#30307a;-webkit-text-stroke:0.2px #30307a">o</span>
<span class="t" style="left:70px;top:374.2px;transform:scaleX(0.97);transform-origin:0 0;font-size:10px;color:#3d3da8;-webkit-text-stroke:0.2px #3d3da8">Manage activities of project team</span>
<span class="t" style="left:28px;top:386.15px;transform:scaleX(0.97);transform-origin:0 0;font-size:10px;color:#3d3da8;-webkit-text-stroke:0.2px #3d3da8;color:#30307a;-webkit-text-stroke:0.2px #30307a">o</span>
<span class="t" style="left:70px;top:386.15px;transform:scaleX(0.97);transform-origin:0 0;font-size:10px;color:#3d3da8;-webkit-text-stroke:0.2px #3d3da8">Establish and implement communication</span>
<span class="t" style="left:28px;top:398.1px;transform:scaleX(0.97);transform-origin:0 0;font-size:10px;color:#3d3da8;-webkit-text-stroke:0.2px #3d3da8">channels to support team interaction and</span>
<span class="t" style="left:28px;top:410.05px;transform:scaleX(0.97);transform-origin:0 0;font-size:10px;color:#3d3da8;-webkit-text-stroke:0.2px #3d3da8">collaboration</span>
<span class="t" style="left:28px;top:422.0px;transform:scaleX(0.97);transform-origin:0 0;font-size:10px;color:#3d3da8;-webkit-text-stroke:0.2px #3d3da8;color:#30307a;-webkit-text-stroke:0.2px #30307a">o</span>
<span class="t" style="left:70px;top:422.0px;transform:scaleX(0.97);transform-origin:0 0;font-size:10px;color:#3d3da8;-webkit-text-stroke:0.2px #3d3da8">Manage project execution risks and</span>
<span class="t" style="left:28px;top:433.95px;transform:scaleX(0.97);transform-origin:0 0;font-size:10px;color:#3d3da8;-webkit-text-stroke:0.2px #3d3da8">respond to threats</span>
<span class="t" style="left:28px;top:445.9px;transform:scaleX(0.97);transform-origin:0 0;font-size:10px;color:#3d3da8;-webkit-text-stroke:0.2px #3d3da8;color:#30307a;-webkit-text-stroke:0.2px #30307a">o</span>
<span class="t" style="left:70px;top:445.9px;transform:scaleX(0.97);transform-origin:0 0;font-size:10px;color:#3d3da8;-webkit-text-stroke:0.2px #3d3da8">Manage procurements and purchasing</span>
<span class="t" style="left:28px;top:457.85px;transform:scaleX(0.97);transform-origin:0 0;font-size:10px;color:#3d3da8;-webkit-text-stroke:0.2px #3d3da8">activities</span>
<span class="t" style="left:28px;top:469.8px;transform:scaleX(0.97);transform-origin:0 0;font-size:10px;color:#3d3da8;-webkit-text-stroke:0.2px #3d3da8;color:#30307a;-webkit-text-stroke:0.2px #30307a">o</span>
<span class="t" style="left:70px;top:469.8px;transform:scaleX(0.97);transform-origin:0 0;font-size:10px;color:#3d3da8;-webkit-text-stroke:0.2px #3d3da8">Collect documents and implement</span>
<span class="t" style="left:28px;top:481.75px;transform:scaleX(0.97);transform-origin:0 0;font-size:10px;color:#3d3da8;-webkit-text-stroke:0.2px #3d3da8">improvement activities</span>
<div style="left:13px;top:494px;width:726px;height:19px;background:#88cbf6;border-top:1px solid #6fb2de;border-bottom:1px solid #6fb2de;border-left:1px solid #6fb2de"></div>
<div style="left:53px;top:494px;width:1px;height:19px;background:#6fb2de"></div>
<div style="left:160px;top:494px;width:1px;height:19px;background:#6fb2de"></div>
<div style="left:387px;top:494px;width:1px;height:19px;background:#6fb2de"></div>
<div style="left:503px;top:494px;width:1px;height:19px;background:#6fb2de"></div>
<div style="left:621px;top:494px;width:1px;height:19px;background:#6fb2de"></div>
<div style="left:28px;top:498px;width:10px;height:10px;background:linear-gradient(135deg,#d6d9de,#fafafa);border:1px solid rgba(80,80,80,0.45);border-radius:2px"></div>
<svg style="position:absolute;left:118.5px;top:497.5px" width="14" height="13" viewBox="0 0 14 13">
<path d="M0.8 11 L1.2 4 Q1.8 1 4 1 L6.8 1 L12.6 7.4 L9.8 9.8 L6.5 10.8 L2.5 12 Z" fill="#2d5a1e" opacity="0.9"/>
<path d="M2.4 3.4 Q3 2 4.2 1.9 L6.6 1.9 L11.4 7.4 L9.2 9.1 L5.6 9.6 Z" fill="#1f9e1f"/>
<path d="M3.5 2.6 L6.2 2.4 L9 5.5 L6 6 Z" fill="#6fd45f"/>
<path d="M2 4.2 L5.4 9.8 L8.8 10.1 L6.2 10.9 L2.2 11.3 Z" fill="#eef6ee"/>
</svg>
<span class="t" style="left:163px;top:500.3px;transform:scaleX(0.79);transform-origin:0 0;font-size:9px;color:#222;-webkit-text-stroke:0.25px #222;">1.4</span>
<svg style="position:absolute;left:389px;top:497px" width="13" height="13" viewBox="0 0 13 13">
<defs><radialGradient id="pg497" cx="0.4" cy="0.35" r="0.7"><stop offset="0" stop-color="#ffd39a"/><stop offset="0.5" stop-color="#f08a1e"/><stop offset="1" stop-color="#b85408"/></radialGradient></defs>
<circle cx="6.5" cy="6.5" r="6" fill="url(#pg497)"/><circle cx="6.5" cy="6.5" r="2.6" fill="#fff" stroke="#f6c58a" stroke-width="0.8"/></svg>
<span class="t" style="left:405px;top:500.3px;transform:scaleX(0.79);transform-origin:0 0;font-size:9px;color:#222;-webkit-text-stroke:0.25px #222;">Normal</span>
<svg style="position:absolute;left:507px;top:497px" width="11" height="13" viewBox="0 0 11 13">
<path d="M0.5 0.5 H7 L10.5 4 V12.5 H0.5 Z" fill="#eef3fb" stroke="#9fb3d0" stroke-width="1"/><path d="M7 0.5 V4 H10.5" fill="#cfdcef" stroke="#9fb3d0" stroke-width="1"/>
<path d="M2 3 V11 H9" fill="none" stroke="#c5d5ec" stroke-width="1"/></svg>
<span class="t" style="left:521px;top:500.3px;transform:scaleX(0.79);transform-origin:0 0;font-size:9px;color:#222;-webkit-text-stroke:0.25px #222;">Created</span>
<span class="t" style="left:621px;top:500.3px;transform:scaleX(0.79);transform-origin:50% 0;font-size:9px;color:#222;-webkit-text-stroke:0.25px #222;width:118px;text-align:center">0 %</span>
<div style="left:13px;top:513px;width:726px;height:64px;background:#fff"></div>
<div style="left:28px;top:519.3px;width:2px;height:2px;background:#555"></div>
<span class="t" style="left:70px;top:516.8px;transform:scaleX(0.97);transform-origin:0 0;font-size:10px;color:#3d3da8;-webkit-text-stroke:0.2px #3d3da8">Project management execution results in</span>
<span class="t" style="left:28px;top:528.75px;transform:scaleX(0.97);transform-origin:0 0;font-size:10px;color:#3d3da8;-webkit-text-stroke:0.2px #3d3da8">producing project deliverables and generating</span>
<span class="t" style="left:28px;top:540.7px;transform:scaleX(0.97);transform-origin:0 0;font-size:10px;color:#3d3da8;-webkit-text-stroke:0.2px #3d3da8">information that will be used later for developing</span>
<span class="t" style="left:28px;top:552.65px;transform:scaleX(0.97);transform-origin:0 0;font-size:10px;color:#3d3da8;-webkit-text-stroke:0.2px #3d3da8">project execution strategy matrix and reporting</span>
<span class="t" style="left:28px;top:564.6px;transform:scaleX(0.97);transform-origin:0 0;font-size:10px;color:#3d3da8;-webkit-text-stroke:0.2px #3d3da8">project activities.</span>
<div style="left:13px;top:577px;width:726px;height:20px;background:#dfb887;border-top:1px solid #c9c2bb;border-left:1px solid #efe3d6"></div>
<div style="left:0px;top:596px;width:739px;height:1px;background:#c9b8a8"></div>
<div style="left:0px;top:597px;width:739px;height:16px;background:#fddbbb;border-bottom:1px solid #e8c9a8"></div>
<div style="left:4px;top:602px;width:7px;height:7px;background:linear-gradient(#fff,#e4e4e4);border:1px solid #8e8e8e;border-radius:1px"></div>
<div style="left:5.5px;top:605px;width:4px;height:1px;background:#333"></div>
<span class="t" style="left:14.5px;top:601px;transform:scaleX(0.97);transform-origin:0 0;font-size:10px;color:#222">Category: 2.Managing human resources.</span>
<span class="t" style="left:200px;top:601px;transform:scaleX(0.97);transform-origin:0 0;font-size:10px;color:#222">[ Project execution checklist ]</span>
<div style="left:13px;top:612px;width:726px;height:19px;background:#88cbf6;border-top:1px solid #6fb2de;border-bottom:1px solid #6fb2de;border-left:1px solid #6fb2de"></div>
<div style="left:53px;top:612px;width:1px;height:19px;background:#6fb2de"></div>
<div style="left:160px;top:612px;width:1px;height:19px;background:#6fb2de"></div>
<div style="left:387px;top:612px;width:1px;height:19px;background:#6fb2de"></div>
<div style="left:503px;top:612px;width:1px;height:19px;background:#6fb2de"></div>
<div style="left:621px;top:612px;width:1px;height:19px;background:#6fb2de"></div>
<div style="left:28px;top:616px;width:10px;height:10px;background:linear-gradient(135deg,#d6d9de,#fafafa);border:1px solid rgba(80,80,80,0.45);border-radius:2px"></div>
<svg style="position:absolute;left:118.5px;top:615.5px" width="14" height="13" viewBox="0 0 14 13">
<path d="M0.8 11 L1.2 4 Q1.8 1 4 1 L6.8 1 L12.6 7.4 L9.8 9.8 L6.5 10.8 L2.5 12 Z" fill="#2d5a1e" opacity="0.9"/>
<path d="M2.4 3.4 Q3 2 4.2 1.9 L6.6 1.9 L11.4 7.4 L9.2 9.1 L5.6 9.6 Z" fill="#1f9e1f"/>
<path d="M3.5 2.6 L6.2 2.4 L9 5.5 L6 6 Z" fill="#6fd45f"/>
<path d="M2 4.2 L5.4 9.8 L8.8 10.1 L6.2 10.9 L2.2 11.3 Z" fill="#eef6ee"/>
</svg>
<span class="t" style="left:163px;top:618.2px;transform:scaleX(0.79);transform-origin:0 0;font-size:9px;color:#222;-webkit-text-stroke:0.25px #222;">2.1</span>
<svg style="position:absolute;left:389px;top:615px" width="13" height="13" viewBox="0 0 13 13">
<defs><radialGradient id="pg615" cx="0.4" cy="0.35" r="0.7"><stop offset="0" stop-color="#ffd39a"/><stop offset="0.5" stop-color="#f08a1e"/><stop offset="1" stop-color="#b85408"/></radialGradient></defs>
<circle cx="6.5" cy="6.5" r="6" fill="url(#pg615)"/><circle cx="6.5" cy="6.5" r="2.6" fill="#fff" stroke="#f6c58a" stroke-width="0.8"/></svg>
<span class="t" style="left:405px;top:618.2px;transform:scaleX(0.79);transform-origin:0 0;font-size:9px;color:#222;-webkit-text-stroke:0.25px #222;">Normal</span>
<svg style="position:absolute;left:507px;top:615px" width="11" height="13" viewBox="0 0 11 13">
<path d="M0.5 0.5 H7 L10.5 4 V12.5 H0.5 Z" fill="#eef3fb" stroke="#9fb3d0" stroke-width="1"/><path d="M7 0.5 V4 H10.5" fill="#cfdcef" stroke="#9fb3d0" stroke-width="1"/>
<path d="M2 3 V11 H9" fill="none" stroke="#c5d5ec" stroke-width="1"/></svg>
<span class="t" style="left:521px;top:618.2px;transform:scaleX(0.79);transform-origin:0 0;font-size:9px;color:#222;-webkit-text-stroke:0.25px #222;">Created</span>
<span class="t" style="left:621px;top:618.2px;transform:scaleX(0.79);transform-origin:50% 0;font-size:9px;color:#222;-webkit-text-stroke:0.25px #222;width:118px;text-align:center">0 %</span>
<div style="left:13px;top:631px;width:726px;height:81px;background:#fff"></div>
<div style="left:28px;top:637.3px;width:2px;height:2px;background:#555"></div>
<span class="t" style="left:70px;top:634.8px;transform:scaleX(0.97);transform-origin:0 0;font-size:10px;color:#3d3da8;-webkit-text-stroke:0.2px #3d3da8">Managing human resource is an independent</span>
<span class="t" style="left:28px;top:646.75px;transform:scaleX(0.97);transform-origin:0 0;font-size:10px;color:#3d3da8;-webkit-text-stroke:0.2px #3d3da8">process aimed at developing and implementing</span>
<span class="t" style="left:28px;top:658.7px;transform:scaleX(0.97);transform-origin:0 0;font-size:10px;color:#3d3da8;-webkit-text-stroke:0.2px #3d3da8">methods and models of organizing, managing and</span>
<span class="t" style="left:28px;top:670.65px;transform:scaleX(0.97);transform-origin:0 0;font-size:10px;color:#3d3da8;-webkit-text-stroke:0.2px #3d3da8">leading project team. The process includes the</span>
<span class="t" style="left:28px;top:682.6px;transform:scaleX(0.97);transform-origin:0 0;font-size:10px;color:#3d3da8;-webkit-text-stroke:0.2px #3d3da8">following three subsidiary processes: Acquiring</span>
<span class="t" style="left:28px;top:694.55px;transform:scaleX(0.97);transform-origin:0 0;font-size:10px;color:#3d3da8;-webkit-text-stroke:0.2px #3d3da8">Project Team, Developing Project Team and</span>
<span class="t" style="left:28px;top:706.5px;transform:scaleX(0.97);transform-origin:0 0;font-size:10px;color:#3d3da8;-webkit-text-stroke:0.2px #3d3da8">Managing Project Team.</span>
<div style="left:0px;top:712px;width:739px;height:20px;background:#dfb887;border-top:1px solid #a9a39c;border-bottom:1px solid #9c9894"></div>
<div style="left:0px;top:712px;width:2px;height:20px;background:#b0aca8"></div>
<div style="left:162px;top:713px;width:225px;height:17px;background:#e8eaeb;border-left:1px solid #fff;border-right:1px solid #bdbdbd;border-bottom:1px solid #c8c8c8"></div>
<span class="t" style="left:164.5px;top:717.5px;transform:scaleX(0.95);transform-origin:0 0;font-size:10px;color:#111;-webkit-text-stroke:0.15px #111">Count: 19</span>
<div style="left:0px;top:85px;width:1.5px;height:647px;background:#b4b0ac"></div>
<div style="left:740px;top:57px;width:13px;height:675px;background:linear-gradient(90deg,#e8e8e8,#f4f4f4)"></div>
<div style="left:739px;top:57px;width:14px;height:675px;background:#ececec;border-left:1px solid #d8d8d8;border-right:1px solid #c4c4c4"></div>
<div style="left:741px;top:58px;width:11px;height:13px;background:linear-gradient(#fafafa,#ececec)"></div>
<div style="left:744px;top:63px;width:0;height:0;border-left:2.5px solid transparent;border-right:2.5px solid transparent;border-bottom:3px solid #333"></div>
<div style="left:741px;top:71px;width:11px;height:167px;background:linear-gradient(90deg,#f6f6f6,#e3e3e3 50%,#cfcfcf);border:1px solid #b5b5b5;border-radius:2px"></div>
<div style="left:744px;top:150px;width:5px;height:1px;background:#8a8a8a"></div>
<div style="left:744px;top:153px;width:5px;height:1px;background:#8a8a8a"></div>
<div style="left:744px;top:156px;width:5px;height:1px;background:#8a8a8a"></div>
<div style="left:741px;top:718px;width:11px;height:13px;background:linear-gradient(#fafafa,#ececec)"></div>
<div style="left:744px;top:723.5px;width:0;height:0;border-left:2.5px solid transparent;border-right:2.5px solid transparent;border-top:3px solid #333"></div>
<div style="left:753px;top:57px;width:207px;height:696px;background:#efefef"></div>
<div style="left:753px;top:57px;width:207px;height:352px;background:#fff;border:1px solid #8c8c8c;border-left:2px solid #6b6b6b;border-right:2px solid #707070"></div>
<div style="left:755px;top:58px;width:202px;height:15px;background:linear-gradient(#ffffff,#f7f7f7)"></div>
<span class="t" style="left:757px;top:61.5px;transform:scaleX(0.86);transform-origin:0 0;font-size:9.5px;color:#222">Categories Bar</span>
<div style="left:921px;top:61px;width:10px;height:10px;background:linear-gradient(#e3e9f3,#b9c6da);border:1px solid #5d6e8a;border-radius:2px"></div>
<div style="left:924px;top:64px;width:4px;height:3px;border:1px solid #30405a"></div>
<svg style="position:absolute;left:933px;top:61px" width="9" height="10"><path d="M2 0.5 H7 M2.5 0.5 V5 M6.5 0.5 V5 M1 5.5 H8 M4.5 5.5 V10" stroke="#666" fill="none" stroke-width="1"/></svg>
<div style="left:945px;top:61px;width:11px;height:11px;background:linear-gradient(#d99a90,#b9645a);border:1px solid #8a4a42;border-radius:2px;box-shadow:inset 0 0 0 1px rgba(255,255,255,.35)"></div>
<svg style="position:absolute;left:947.5px;top:63.5px" width="6" height="6"><path d="M1 1 L5 5 M5 1 L1 5" stroke="#f4e8e4" stroke-width="1.3"/></svg>
<div style="left:755px;top:73px;width:202px;height:24px;background:linear-gradient(#f3f5fa,#dfe3ef 60%,#d5dae8);border-bottom:1px solid #a9adb8"></div>
<div style="left:758px;top:78px;width:1px;height:1px;background:#8a8fa0"></div>
<div style="left:758px;top:81px;width:1px;height:1px;background:#8a8fa0"></div>
<div style="left:758px;top:84px;width:1px;height:1px;background:#8a8fa0"></div>
<div style="left:758px;top:87px;width:1px;height:1px;background:#8a8fa0"></div>
<div style="left:758px;top:90px;width:1px;height:1px;background:#8a8fa0"></div>
<div style="left:758px;top:93px;width:1px;height:1px;background:#8a8fa0"></div>
<svg style="position:absolute;left:765px;top:80px" width="13" height="12" viewBox="0 0 13 12">
<rect x="0.5" y="2.5" width="11" height="9" fill="#f4f8fc" stroke="#8ea4c4"/><rect x="0.5" y="2.5" width="11" height="2" fill="#4a8ad8"/><rect x="0.5" y="10" width="11" height="1.5" fill="#7f8b9c"/><path d="M8 3 H12 M10 1 V5" stroke="#2a9a2a" stroke-width="1.6"/></svg>
<svg style="position:absolute;left:782px;top:80px" width="13" height="12" viewBox="0 0 13 12">
<rect x="0.5" y="0.5" width="4" height="3" fill="#4a8ad8"/><rect x="3" y="4" width="6" height="2" fill="#6aa0e0"/><rect x="3" y="7" width="6" height="2" fill="#6aa0e0"/><rect x="3" y="10" width="6" height="2" fill="#6aa0e0"/><path d="M1.5 3 V11 H3" stroke="#4a8ad8" fill="none"/><path d="M8 3 H12 M10 1 V5" stroke="#2a9a2a" stroke-width="1.6"/></svg>
<svg style="position:absolute;left:801px;top:80px" width="13" height="12" viewBox="0 0 13 12">
<rect x="0.5" y="2.5" width="11" height="9" fill="#f4f8fc" stroke="#8ea4c4"/><rect x="0.5" y="2.5" width="11" height="2" fill="#4a8ad8"/><rect x="0.5" y="10" width="11" height="1.5" fill="#7f8b9c"/><path d="M3 9 L11 1" stroke="#d9a040" stroke-width="1.8"/><path d="M10 1 L12 0" stroke="#d03030" stroke-width="1.6"/></svg>
<svg style="position:absolute;left:819px;top:80px" width="13" height="12" viewBox="0 0 13 12">
<rect x="0.5" y="2.5" width="11" height="9" fill="#f4f8fc" stroke="#8ea4c4"/><rect x="0.5" y="2.5" width="11" height="2" fill="#4a8ad8"/><rect x="0.5" y="10" width="11" height="1.5" fill="#7f8b9c"/><path d="M6 6 L11 11 M11 6 L6 11" stroke="#e03030" stroke-width="1.4"/></svg>
<div style="left:835px;top:88px;width:0;height:0;border-left:3px solid transparent;border-right:3px solid transparent;border-top:3px solid #000"></div>
<div style="left:755px;top:97px;width:202px;height:13px;background:linear-gradient(#fdfdfd,#f0f1f3)"></div>
<div style="left:914px;top:98px;width:1px;height:11px;background:#e0e0e0"></div>
<div style="left:939px;top:98px;width:1px;height:11px;background:#e0e0e0"></div>
<span class="t" style="left:917.5px;top:99.5px;transform:scaleX(0.85);transform-origin:0 0;font-size:9.5px;color:#333">Un...</span>
<span class="t" style="left:943px;top:99.5px;transform:scaleX(0.85);transform-origin:0 0;font-size:9.5px;color:#333">T...</span>
<div style="left:759px;top:113px;width:7px;height:7px;background:linear-gradient(#fff,#e6e6e6);border:1px solid #9a9a9a"></div>
<div style="left:760.5px;top:116px;width:4px;height:1px;background:#333"></div>
<div style="left:767px;top:117px;width:3px;height:1px;background:#a8a8a8"></div>
<svg style="position:absolute;left:769px;top:112px" width="14" height="11" viewBox="0 0 14 11">
<path d="M0.5 1.5 H5 L6 3 H11 V10.5 H0.5 Z" fill="#f3d35a" stroke="#c9a02a"/><path d="M2.5 5 H13.5 L11 10.5 H0.5 Z" fill="#ffe680" stroke="#c9a02a"/></svg>
<div style="left:776px;top:123px;width:1px;height:47px;background:#c4c4c4"></div>
<div style="left:777px;top:130px;width:7px;height:1px;background:#c4c4c4"></div>
<div style="left:777px;top:144px;width:7px;height:1px;background:#c4c4c4"></div>
<div style="left:777px;top:157px;width:7px;height:1px;background:#c4c4c4"></div>
<div style="left:777px;top:170px;width:7px;height:1px;background:#c4c4c4"></div>
<div style="left:784px;top:110px;width:174px;height:14px;border:1px solid #333;background:#fff"></div>
<div style="left:913px;top:111px;width:44px;height:12px;background:#ededed"></div>
<svg style="position:absolute;left:786px;top:111px" width="13" height="12" viewBox="0 0 13 12">
<path d="M0.5 2 Q3.5 0 6.5 2 Q9.5 0 12.5 2 V11 Q9.5 9 6.5 11 Q3.5 9 0.5 11 Z" fill="#f2f6fb" stroke="#d58a5a"/><path d="M6.5 2 V11" stroke="#6a90c8"/><path d="M3 4 L6 6 M7 6 L10 4" stroke="#7fa2d8"/></svg>
<div style="left:801px;top:111px;width:112px;height:12px;overflow:hidden"><span class="t" style="left:1px;top:1px;transform:scaleX(0.92);transform-origin:0 0;font-size:9.5px;font-weight:bold;color:#111;letter-spacing:0.15px">Project execution checklist</span></div>
<span class="t" style="left:928px;top:112px;font-size:9.5px;font-weight:bold;color:#111;letter-spacing:0.15px">19</span>
<span class="t" style="left:945px;top:112px;font-size:9.5px;font-weight:bold;color:#111;letter-spacing:0.15px">19</span>
<svg style="position:absolute;left:786px;top:125px" width="13" height="12" viewBox="0 0 13 12">
<circle cx="3.5" cy="3.5" r="3" fill="#f0a030"/><path d="M0 12 Q0 7 3.5 7 Q7 7 7 12 Z" fill="#3a6ad0"/>
<circle cx="9.5" cy="3.5" r="3" fill="#c05010"/><circle cx="9.5" cy="3.5" r="2" fill="#e8a050"/><path d="M6 12 Q6 7 9.5 7 Q13 7 13 12 Z" fill="#30a040"/></svg>
<div style="left:801px;top:124px;width:111px;height:14px;overflow:hidden"><span class="t" style="left:1px;top:2px;transform:scaleX(0.92);transform-origin:0 0;font-size:9.5px;font-weight:bold;color:#111;letter-spacing:0.15px">1.Project execution summ</span></div>
<span class="t" style="left:935px;top:126px;font-size:9.5px;font-weight:bold;color:#111;letter-spacing:0.15px">4</span>
<span class="t" style="left:951px;top:126px;font-size:9.5px;font-weight:bold;color:#111;letter-spacing:0.15px">4</span>
<svg style="position:absolute;left:787px;top:138px" width="11" height="13" viewBox="0 0 11 13">
<rect x="0.5" y="1.5" width="10" height="11" rx="1" fill="#f4f4f4" stroke="#a05050"/><rect x="0.5" y="1.5" width="3" height="11" fill="#c06060"/><path d="M3 0 V3 M8 0 V3" stroke="#555"/><text x="5" y="11" font-size="6" fill="#333" font-family="Liberation Sans">5</text></svg>
<div style="left:801px;top:138px;width:111px;height:14px;overflow:hidden"><span class="t" style="left:1px;top:2px;transform:scaleX(0.92);transform-origin:0 0;font-size:9.5px;font-weight:bold;color:#111;letter-spacing:0.15px">2.Managing human resour</span></div>
<span class="t" style="left:935px;top:140px;font-size:9.5px;font-weight:bold;color:#111;letter-spacing:0.15px">4</span>
<span class="t" style="left:951px;top:140px;font-size:9.5px;font-weight:bold;color:#111;letter-spacing:0.15px">4</span>
<svg style="position:absolute;left:787px;top:151px" width="12" height="13" viewBox="0 0 12 13">
<path d="M11 1 L6 5 L8 6 L1 12 L5 6.5 L3 5.5 L9 1 Z" fill="#3f78d8" stroke="#1f4a98" stroke-width="0.7"/></svg>
<div style="left:801px;top:151px;width:111px;height:14px;overflow:hidden"><span class="t" style="left:1px;top:2px;transform:scaleX(0.92);transform-origin:0 0;font-size:9.5px;font-weight:bold;color:#111;letter-spacing:0.15px">3.Distributing information.</span></div>
<span class="t" style="left:935px;top:153px;font-size:9.5px;font-weight:bold;color:#111;letter-spacing:0.15px">5</span>
<span class="t" style="left:951px;top:153px;font-size:9.5px;font-weight:bold;color:#111;letter-spacing:0.15px">5</span>
<svg style="position:absolute;left:786px;top:165.3px" width="13" height="12" viewBox="0 0 13 12">
<circle cx="3.5" cy="3.5" r="3" fill="#f0a030"/><path d="M0 12 Q0 7 3.5 7 Q7 7 7 12 Z" fill="#3a6ad0"/>
<circle cx="9.5" cy="3.5" r="3" fill="#c05010"/><circle cx="9.5" cy="3.5" r="2" fill="#e8a050"/><path d="M6 12 Q6 7 9.5 7 Q13 7 13 12 Z" fill="#30a040"/></svg>
<div style="left:801px;top:164.3px;width:111px;height:14px;overflow:hidden"><span class="t" style="left:1px;top:2px;transform:scaleX(0.92);transform-origin:0 0;font-size:9.5px;font-weight:bold;color:#111;letter-spacing:0.15px">4.Managing project procu</span></div>
<span class="t" style="left:935px;top:166.3px;font-size:9.5px;font-weight:bold;color:#111;letter-spacing:0.15px">6</span>
<span class="t" style="left:951px;top:166.3px;font-size:9.5px;font-weight:bold;color:#111;letter-spacing:0.15px">6</span>
<div style="left:753px;top:410px;width:207px;height:318px;background:#efefef;border:1px solid #8c8c8c;border-left:2px solid #6b6b6b;border-right:2px solid #707070"></div>
<div style="left:755px;top:411px;width:202px;height:16px;background:linear-gradient(#ffffff,#f7f7f7)"></div>
<span class="t" style="left:757px;top:414px;transform:scaleX(0.86);transform-origin:0 0;font-size:9.5px;color:#222">Filters Bar</span>
<div style="left:921px;top:414px;width:10px;height:10px;background:linear-gradient(#e3e9f3,#b9c6da);border:1px solid #5d6e8a;border-radius:2px"></div>
<div style="left:924px;top:417px;width:4px;height:3px;border:1px solid #30405a"></div>
<svg style="position:absolute;left:933px;top:414px" width="9" height="10"><path d="M2 0.5 H7 M2.5 0.5 V5 M6.5 0.5 V5 M1 5.5 H8 M4.5 5.5 V10" stroke="#666" fill="none" stroke-width="1"/></svg>
<div style="left:945px;top:414px;width:11px;height:11px;background:linear-gradient(#d99a90,#b9645a);border:1px solid #8a4a42;border-radius:2px;box-shadow:inset 0 0 0 1px rgba(255,255,255,.35)"></div>
<svg style="position:absolute;left:947.5px;top:416.5px" width="6" height="6"><path d="M1 1 L5 5 M5 1 L1 5" stroke="#f4e8e4" stroke-width="1.3"/></svg>
<div style="left:755px;top:427px;width:202px;height:23px;background:linear-gradient(#f3f5fa,#dfe3ef 60%,#d5dae8);border-bottom:1px solid #a9adb8"></div>
<div style="left:758px;top:432px;width:1px;height:1px;background:#8a8fa0"></div>
<div style="left:758px;top:435px;width:1px;height:1px;background:#8a8fa0"></div>
<div style="left:758px;top:438px;width:1px;height:1px;background:#8a8fa0"></div>
<div style="left:758px;top:441px;width:1px;height:1px;background:#8a8fa0"></div>
<div style="left:758px;top:444px;width:1px;height:1px;background:#8a8fa0"></div>
<div style="left:758px;top:447px;width:1px;height:1px;background:#8a8fa0"></div>
<div style="left:761px;top:431px;width:70px;height:17px;background:#aecbea;border:1px solid #9bb8d8"></div>
<div style="left:825px;top:432px;width:5px;height:15px;background:#fff;border-left:1px solid #c8c8c8"></div>
<span class="t" style="left:764px;top:434px;transform:scaleX(0.88);transform-origin:0 0;font-size:10.5px;color:#6f8fb2">Custom</span>
<svg style="position:absolute;left:834px;top:433px" width="14" height="13" viewBox="0 0 14 13">
<path d="M6 0.5 H11 L13.5 3 V10 H6 Z" fill="#eef2f8" stroke="#9aaac0"/><path d="M1 9 Q4 4 9 4 L8 2 L12 5 L8 8 L9 6 Q5 6 3 11 Z" fill="#3aa83a"/><path d="M1 12 Q1 9 4 9 V12 Z" fill="#7070d0"/></svg>
<div style="left:848px;top:438px;width:0;height:0;border-left:3px solid transparent;border-right:3px solid transparent;border-top:3px solid #000"></div>
<svg style="position:absolute;left:859px;top:432px" width="14" height="12" viewBox="0 0 14 12">
<path d="M2 9 L8 2 Q10 0 12 2 Q13.5 4 12 5.5 L6 11 H3 Q0.5 11 2 9 Z" fill="#f4f4f4" stroke="#8a8a8a"/><path d="M1 11.5 H12" stroke="#8a8a8a"/></svg>
<svg style="position:absolute;left:878px;top:434px" width="10" height="10"><path d="M1 1 L9 9 M9 1 L1 9" stroke="#a8a8a8" stroke-width="2.2"/></svg>
<div style="left:893px;top:442px;width:0;height:0;border-left:3px solid transparent;border-right:3px solid transparent;border-top:3px solid #000"></div>
<div style="left:755px;top:450px;width:203px;height:143px;background:#eeeeee"></div>
<div style="left:755px;top:451.0px;width:203px;height:16px;border-bottom:1px solid #d2d2d2"></div>
<span class="t" style="left:767px;top:454.0px;transform:scaleX(0.8);transform-origin:0 0;font-size:10px;color:#1a1a1a">Completion</span>
<div style="left:944px;top:452.0px;width:13px;height:14px;background:linear-gradient(#fbfbfb,#dcdcdc);border:1px solid #8f8f8f"></div>
<div style="left:947px;top:458.0px;width:0;height:0;border-left:3px solid transparent;border-right:3px solid transparent;border-top:3px solid #000"></div>
<div style="left:755px;top:466.8px;width:203px;height:16px;border-bottom:1px solid #d2d2d2"></div>
<span class="t" style="left:767px;top:469.8px;transform:scaleX(0.8);transform-origin:0 0;font-size:10px;color:#1a1a1a">Due Date</span>
<div style="left:944px;top:467.8px;width:13px;height:14px;background:linear-gradient(#fbfbfb,#dcdcdc);border:1px solid #8f8f8f"></div>
<div style="left:947px;top:473.8px;width:0;height:0;border-left:3px solid transparent;border-right:3px solid transparent;border-top:3px solid #000"></div>
<div style="left:755px;top:482.6px;width:203px;height:16px;border-bottom:1px solid #d2d2d2"></div>
<span class="t" style="left:767px;top:485.6px;transform:scaleX(0.8);transform-origin:0 0;font-size:10px;color:#1a1a1a">Status</span>
<div style="left:944px;top:483.6px;width:13px;height:14px;background:linear-gradient(#fbfbfb,#dcdcdc);border:1px solid #8f8f8f"></div>
<div style="left:947px;top:489.6px;width:0;height:0;border-left:3px solid transparent;border-right:3px solid transparent;border-top:3px solid #000"></div>
<div style="left:755px;top:498.4px;width:203px;height:16px;border-bottom:1px solid #d2d2d2"></div>
<span class="t" style="left:767px;top:501.4px;transform:scaleX(0.8);transform-origin:0 0;font-size:10px;color:#1a1a1a">Priority</span>
<div style="left:944px;top:499.4px;width:13px;height:14px;background:linear-gradient(#fbfbfb,#dcdcdc);border:1px solid #8f8f8f"></div>
<div style="left:947px;top:505.4px;width:0;height:0;border-left:3px solid transparent;border-right:3px solid transparent;border-top:3px solid #000"></div>
<div style="left:755px;top:514.2px;width:203px;height:16px;border-bottom:1px solid #d2d2d2"></div>
<span class="t" style="left:767px;top:517.2px;transform:scaleX(0.8);transform-origin:0 0;font-size:10px;color:#1a1a1a">Task Name</span>
<div style="left:755px;top:530.0px;width:203px;height:16px;border-bottom:1px solid #d2d2d2"></div>
<span class="t" style="left:767px;top:533.0px;transform:scaleX(0.8);transform-origin:0 0;font-size:10px;color:#1a1a1a">Date Created</span>
<div style="left:944px;top:531.0px;width:13px;height:14px;background:linear-gradient(#fbfbfb,#dcdcdc);border:1px solid #8f8f8f"></div>
<div style="left:947px;top:537.0px;width:0;height:0;border-left:3px solid transparent;border-right:3px solid transparent;border-top:3px solid #000"></div>
<div style="left:755px;top:545.8px;width:203px;height:16px;border-bottom:1px solid #d2d2d2"></div>
<span class="t" style="left:767px;top:548.8px;transform:scaleX(0.8);transform-origin:0 0;font-size:10px;color:#1a1a1a">Date Last Modifi</span>
<div style="left:944px;top:546.8px;width:13px;height:14px;background:linear-gradient(#fbfbfb,#dcdcdc);border:1px solid #8f8f8f"></div>
<div style="left:947px;top:552.8px;width:0;height:0;border-left:3px solid transparent;border-right:3px solid transparent;border-top:3px solid #000"></div>
<div style="left:755px;top:561.6px;width:203px;height:16px;border-bottom:1px solid #d2d2d2"></div>
<span class="t" style="left:767px;top:564.6px;transform:scaleX(0.8);transform-origin:0 0;font-size:10px;color:#1a1a1a">Date Opened</span>
<div style="left:944px;top:562.6px;width:13px;height:14px;background:linear-gradient(#fbfbfb,#dcdcdc);border:1px solid #8f8f8f"></div>
<div style="left:947px;top:568.6px;width:0;height:0;border-left:3px solid transparent;border-right:3px solid transparent;border-top:3px solid #000"></div>
<div style="left:755px;top:577.4px;width:203px;height:16px;border-bottom:1px solid #d2d2d2"></div>
<span class="t" style="left:767px;top:580.4px;transform:scaleX(0.8);transform-origin:0 0;font-size:10px;color:#1a1a1a">Date Completed</span>
<div style="left:944px;top:578.4px;width:13px;height:14px;background:linear-gradient(#fbfbfb,#dcdcdc);border:1px solid #8f8f8f"></div>
<div style="left:947px;top:584.4px;width:0;height:0;border-left:3px solid transparent;border-right:3px solid transparent;border-top:3px solid #000"></div>
<div style="left:829px;top:450px;width:1px;height:143px;background:#c8c8c8"></div>
<div style="left:753px;top:728px;width:207px;height:24px;background:#fff;border-left:2px solid #6b6b6b"></div>
<div style="left:757px;top:729px;width:43px;height:21px;background:#fff;border:1px solid #a0a0a0;border-top:none"></div>
<span class="t" style="left:760px;top:736px;transform:scaleX(0.84);transform-origin:0 0;font-size:9.5px;color:#333">Filters Bar</span>
<div style="left:800px;top:734px;width:57px;height:15px;background:linear-gradient(#e6ebf2,#d6dde7);border:1px solid #b0b6c0;border-top:none"></div>
<span class="t" style="left:802px;top:736px;transform:scaleX(0.84);transform-origin:0 0;font-size:9.5px;color:#334">Navigation Bar</span>
<span class="t" style="left:760.5px;top:751.5px;font-family:'Liberation Mono',monospace;font-weight:bold;font-size:16.5px;color:#320404;-webkit-text-stroke:0.5px #320404;transform:scaleY(0.71);transform-origin:0 0">www.todolistsoft.com</span>
<div style="left:0px;top:732px;width:753px;height:21px;background:#fff"></div>
<div style="left:0px;top:753px;width:960px;height:1px;background:#b4b4b4"></div>
<div style="left:0px;top:765.5px;width:960px;height:1px;background:#c8c8c8"></div>
<div style="left:4px;top:733.5px;width:52px;height:17px;background:linear-gradient(#f6f6f6,#dcdcdc);border:1px solid #a9a9a9"></div>
<span class="t" style="left:5px;top:738.5px;transform:scaleX(0.85);transform-origin:0 0;font-size:10px;color:#111">Note</span>
<div style="left:55px;top:733.5px;width:20px;height:17px;background:linear-gradient(#f6f6f6,#dcdcdc);border:1px solid #a9a9a9"></div>
<span class="t" style="left:57px;top:738.5px;transform:scaleX(0.85);transform-origin:0 0;font-size:10px;color:#111">S...</span>
<div style="left:45px;top:766.5px;width:43px;height:3px;border:1px solid #8a8a8a;border-bottom:none;border-radius:2px 2px 0 0;background:#e4e4e4"></div>
<div style="left:91px;top:766.5px;width:44px;height:3px;border:1px solid #8a8a8a;border-bottom:none;border-radius:2px 2px 0 0;background:#e4e4e4"></div>
<div style="left:137px;top:766.5px;width:44px;height:3px;border:1px solid #8a8a8a;border-bottom:none;border-radius:2px 2px 0 0;background:#e4e4e4"></div>
<div style="left:183px;top:766.5px;width:44px;height:3px;border:1px solid #8a8a8a;border-bottom:none;border-radius:2px 2px 0 0;background:#e4e4e4"></div>
<!--BOTTOMRIGHT-->
</body></html>
